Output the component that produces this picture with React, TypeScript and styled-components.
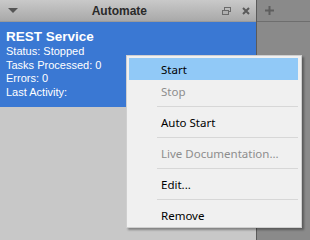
import styled, { createGlobalStyle } from "styled-components";

const Global = createGlobalStyle`
  html, body {
    margin: 0;
    padding: 0;
    background: #c8c8c8;
    overflow: hidden;
  }
  body {
    font-family: "Liberation Sans", Arial, sans-serif;
  }
`;

const Screen = styled.div`
  position: relative;
  display: flex;
  width: 310px;
  height: 240px;
  overflow: hidden;
`;

const LeftPanel = styled.div`
  width: 256px;
  display: flex;
  flex-direction: column;
  background: #c8c8c8;
`;

const TitleBar = styled.div`
  height: 22px;
  box-sizing: border-box;
  display: flex;
  align-items: center;
  padding: 0 6px 0 8px;
  background: linear-gradient(#c9c9c9, #a9a9a9);
  border-bottom: 1px solid #9a9a9a;
`;

const Title = styled.div`
  flex: 1;
  text-align: right;
  margin-right: 75px;
  font-weight: bold;
  font-size: 12px;
  color: #2a2a2a;
`;

const TitleIcons = styled.div`
  display: flex;
  align-items: center;
  gap: 11px;
`;

const ServiceCard = styled.div`
  background: #3a78d3;
  color: #ffffff;
  padding: 6px 6px 0;
  height: 85px;
  box-sizing: border-box;
  font-size: 11px;
  line-height: 13.7px;
`;

const ServiceName = styled.div`
  font-weight: bold;
  font-size: 13.5px;
  line-height: 17px;
`;

const Divider = styled.div`
  width: 1px;
  background: #5a5a5a;
`;

const RightPanel = styled.div`
  flex: 1;
  background: #8a8a8a;
  display: flex;
  flex-direction: column;
`;

const RightBar = styled.div`
  height: 22px;
  box-sizing: border-box;
  border-bottom: 1px solid #6e6e6e;
  display: flex;
  align-items: center;
  padding-left: 8px;
`;

const Menu = styled.div`
  position: absolute;
  left: 126px;
  top: 55px;
  width: 176px;
  box-sizing: border-box;
  background: #f0f0f0;
  border: 1px solid #cfcfcf;
  padding: 2px 3px 1px 2px;
  box-shadow: 2px 2px 2px rgba(0, 0, 0, 0.35);
`;

const Item = styled.div<{ $active?: boolean; $disabled?: boolean }>`
  height: 22px;
  display: flex;
  align-items: center;
  padding-left: 32px;
  font-family: "Noto Sans", "Open Sans", sans-serif;
  font-size: 11.5px;
  color: ${(p) => (p.$disabled ? "#8d8d8d" : "#000000")};
  background: ${(p) => (p.$active ? "#91c9f7" : "transparent")};
`;

const Separator = styled.div`
  height: 1px;
  margin: 4px 0 4px 28px;
  background: #d7d7d7;
`;

export default function App() {
  return (
    <Screen>
      <Global />
      <LeftPanel>
        <TitleBar>
          <svg width="10" height="6" viewBox="0 0 10 6">
            <path d="M0 0 H10 L5 5 Z" fill="#555" />
          </svg>
          <Title>Automate</Title>
          <TitleIcons>
            <svg width="9" height="8" viewBox="0 0 9 8">
              <rect x="2.5" y="0.5" width="6" height="4" fill="none" stroke="#6a6a6a" />
              <rect x="0.5" y="3.5" width="6" height="4" fill="#b0b0b0" stroke="#6a6a6a" />
            </svg>
            <svg width="8" height="8" viewBox="0 0 8 8">
              <path d="M1 1 L7 7 M7 1 L1 7" stroke="#5a5a5a" strokeWidth="2" />
            </svg>
          </TitleIcons>
        </TitleBar>
        <ServiceCard>
          <ServiceName>REST Service</ServiceName>
          <div>Status: Stopped</div>
          <div>Tasks Processed: 0</div>
          <div>Errors: 0</div>
          <div>Last Activity:</div>
        </ServiceCard>
      </LeftPanel>
      <Divider />
      <RightPanel>
        <RightBar>
          <svg width="9" height="9" viewBox="0 0 9 9">
            <path d="M4.5 0 V9 M0 4.5 H9" stroke="#5e5e5e" strokeWidth="2" />
          </svg>
        </RightBar>
      </RightPanel>
      <Menu>
        <Item $active>Start</Item>
        <Item $disabled>Stop</Item>
        <Separator />
        <Item>Auto Start</Item>
        <Separator />
        <Item $disabled>Live Documentation...</Item>
        <Separator />
        <Item>Edit...</Item>
        <Separator />
        <Item>Remove</Item>
      </Menu>
    </Screen>
  );
}
